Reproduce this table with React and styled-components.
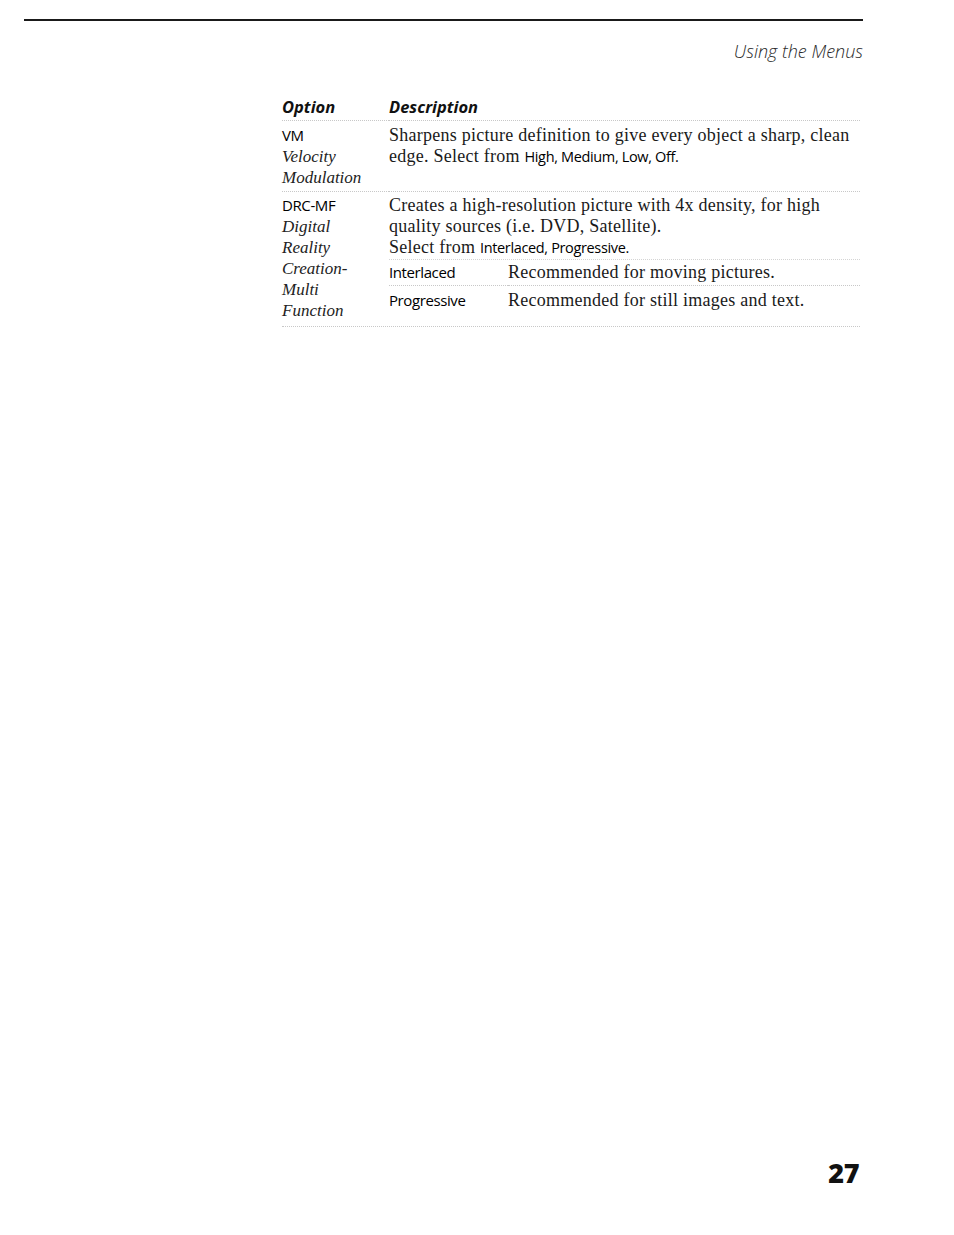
import { Fragment } from 'react';
import styled, { createGlobalStyle } from 'styled-components';

const GlobalStyle = createGlobalStyle`
  html, body {
    margin: 0;
    padding: 0;
    background: #fff;
  }
`;

const Page = styled.div`
  width: 954px;
  height: 1235px;
  box-sizing: border-box;
  padding: 19px 91px 0 24px;
  display: flex;
  flex-direction: column;
  color: #111;
`;

const TopRule = styled.div`
  height: 2px;
  background: #1a1a1a;
`;

const RunningHead = styled.div`
  margin-top: 19px;
  text-align: right;
  font-family: "Open Sans", "Noto Sans", sans-serif;
  font-style: italic;
  font-weight: 300;
  font-size: 18px;
  line-height: 22px;
  color: #2a2a2a;
`;

const Table = styled.div`
  margin: 34px 3px 0 258px;
  display: grid;
  grid-template-columns: 107px 1fr;
  border-bottom: 1px dotted #c8c8c8;
`;

const HeadCell = styled.div`
  font-family: "Open Sans", "Noto Sans", sans-serif;
  font-weight: 700;
  font-style: italic;
  font-size: 16.5px;
  line-height: 21px;
  padding: 0 0 3px;
  border-bottom: 1px dotted #c8c8c8;
`;

const OptionCell = styled.div`
  padding: ${p => p.$pad || '4px 0 3px'};
  border-bottom: ${p => (p.$last ? 'none' : '1px dotted #c8c8c8')};
  display: flex;
  flex-direction: column;
`;

const DescCell = styled(OptionCell)``;

const Code = styled.span`
  font-family: "Open Sans", "Noto Sans", sans-serif;
  font-size: 15px;
  line-height: 21px;
  letter-spacing: -0.4px;
  color: #000;
`;

const FullName = styled.span`
  font-family: "Liberation Serif", "Times New Roman", serif;
  font-style: italic;
  font-size: 17px;
  line-height: 21px;
  color: #222;
`;

const Text = styled.p`
  margin: 0;
  font-family: "Liberation Serif", "Times New Roman", serif;
  font-size: 18px;
  letter-spacing: 0.25px;
  line-height: 21px;
  color: #1a1a1a;
  white-space: nowrap;
`;

const Sans = styled.span`
  font-family: "Open Sans", "Noto Sans", sans-serif;
  font-size: 14.5px;
  letter-spacing: -0.35px;
  color: #000;
`;

const SubTable = styled.div`
  margin-top: 1px;
  display: grid;
  grid-template-columns: 119px 1fr;
  border-top: 1px dotted #d4d4d4;
`;

const SubCell = styled.div`
  padding: ${p => (p.$first ? '2px 0 2px' : '4px 0 8px')};
  border-bottom: ${p => (p.$first ? '1px dotted #c8c8c8' : 'none')};
  display: flex;
  align-items: center;
`;

const PageNumber = styled.div`
  margin-top: auto;
  margin-bottom: 48px;
  align-self: flex-end;
  margin-right: 4px;
  font-family: "Open Sans", "Noto Sans", sans-serif;
  font-weight: 800;
  font-size: 27px;
  line-height: 28px;
  letter-spacing: -0.5px;
`;

const subOptions = [
  { name: 'Interlaced', text: 'Recommended for moving pictures.' },
  { name: 'Progressive', text: 'Recommended for still images and text.' },
];

export default function App() {
  return (
    <>
      <GlobalStyle />
      <Page>
        <TopRule />
        <RunningHead>Using the Menus</RunningHead>

        <Table>
          <HeadCell>Option</HeadCell>
          <HeadCell>Description</HeadCell>

          <OptionCell>
            <Code>VM</Code>
            <FullName>Velocity</FullName>
            <FullName>Modulation</FullName>
          </OptionCell>
          <DescCell>
            <Text>
              Sharpens picture definition to give every object a sharp, clean
              <br />
              edge. Select from <Sans>High, Medium, Low, Off.</Sans>
            </Text>
          </DescCell>

          <OptionCell $last $pad="3px 0 5px">
            <Code>DRC-MF</Code>
            <FullName>Digital</FullName>
            <FullName>Reality</FullName>
            <FullName>Creation-</FullName>
            <FullName>Multi</FullName>
            <FullName>Function</FullName>
          </OptionCell>
          <DescCell $last $pad="3px 0 5px">
            <Text>
              Creates a high-resolution picture with 4x density, for high
              <br />
              quality sources (i.e. DVD, Satellite).
              <br />
              Select from <Sans>Interlaced, Progressive.</Sans>
            </Text>
            <SubTable>
              {subOptions.map((o, i) => (
                <Fragment key={o.name}>
                  <SubCell $first={i === 0}>
                    <Code>{o.name}</Code>
                  </SubCell>
                  <SubCell $first={i === 0}>
                    <Text>{o.text}</Text>
                  </SubCell>
                </Fragment>
              ))}
            </SubTable>
          </DescCell>
        </Table>

        <PageNumber>27</PageNumber>
      </Page>
    </>
  );
}
